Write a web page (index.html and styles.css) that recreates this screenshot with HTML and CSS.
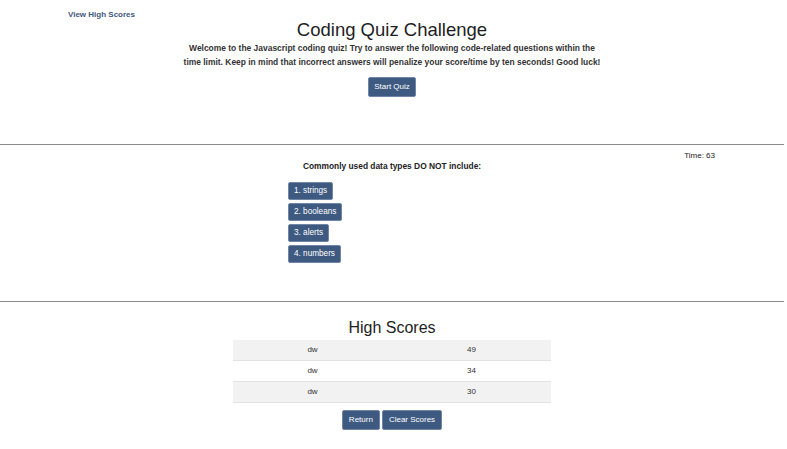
FILE: index.html
```html
<!DOCTYPE html>
<html>
<head>
<meta charset="utf-8">
<link rel="stylesheet" href="styles.css">
</head>
<body>
<header class="top">
  <a class="view-link" href="#">View High Scores</a>
</header>
<section class="intro">
  <h1 class="title">Coding Quiz Challenge</h1>
  <p class="lead">Welcome to the Javascript coding quiz! Try to answer the following code-related questions within the<br>time limit. Keep in mind that incorrect answers will penalize your score/time by ten seconds! Good luck!</p>
  <button class="btn start-btn">Start Quiz</button>
</section>
<hr class="rule">
<section class="quiz">
  <div class="timer">Time: 63</div>
  <p class="question">Commonly used data types DO NOT include:</p>
  <div class="choices">
    <button class="btn choice">1. strings</button>
    <button class="btn choice">2. booleans</button>
    <button class="btn choice">3. alerts</button>
    <button class="btn choice">4. numbers</button>
  </div>
</section>
<hr class="rule">
<section class="scores">
  <h2 class="scores-title">High Scores</h2>
  <table class="score-table">
    <tr class="odd"><td>dw</td><td>49</td></tr>
    <tr><td>dw</td><td>34</td></tr>
    <tr class="odd"><td>dw</td><td>30</td></tr>
  </table>
  <div class="score-actions">
    <button class="btn">Return</button>
    <button class="btn">Clear Scores</button>
  </div>
</section>
</body>
</html>
```
FILE: styles.css
```css
html, body {
  margin: 0;
  padding: 0;
  background: #fff;
}
body {
  font-family: "Liberation Sans", Arial, sans-serif;
  color: #222;
  width: 784px;
}
.top {
  padding: 9px 0 0 68px;
  height: 12px;
}
.view-link {
  font-size: 8px;
  font-weight: bold;
  color: #41597e;
  text-decoration: none;
  line-height: 12px;
  display: block;
}
.intro {
  text-align: center;
}
.title {
  font-size: 18.5px;
  font-weight: normal;
  margin: -1px 0 0;
  line-height: 20px;
  color: #1e1e1e;
}
.lead {
  font-size: 8.45px;
  font-weight: bold;
  line-height: 14px;
  color: #333;
  margin: 1px 0 6px;
}
.btn {
  font-family: "Liberation Sans", Arial, sans-serif;
  background: #3e5a81;
  color: #fff;
  border: 1px solid #6f86a6;
  border-radius: 2px;
  font-size: 8px;
  padding: 0 5px;
  height: 19px;
  line-height: 17px;
  cursor: pointer;
}
.start-btn {
  width: 48px;
  height: 20px;
  padding: 0;
}
.rule {
  margin: 47px 0 0;
  border: 0;
  border-top: 1px solid #8a8a8a;
  height: 0;
}
.quiz {
  height: 156px;
}
.timer {
  text-align: right;
  padding-right: 69px;
  font-size: 8px;
  color: #222;
  padding-top: 6px;
  line-height: 10px;
}
.question {
  text-align: center;
  font-size: 8.4px;
  font-weight: bold;
  margin: -1px 0 0;
  line-height: 12px;
  color: #222;
}
.choices {
  display: flex;
  flex-direction: column;
  align-items: flex-start;
  gap: 3px;
  padding-left: 288px;
  margin-top: 10px;
}
.choice {
  height: 18px;
  line-height: 16px;
  padding: 0 5px;
  font-size: 8.2px;
}
.quiz + .rule {
  margin-top: 0;
}
.scores {
  text-align: center;
}
.scores-title {
  font-size: 16px;
  font-weight: normal;
  margin: 16px 0 0;
  line-height: 20px;
  color: #1e1e1e;
}
.score-table {
  width: 318px;
  margin: 2px auto 0;
  border-collapse: collapse;
  font-size: 8px;
  color: #333;
}
.score-table td {
  width: 50%;
  height: 20px;
  padding: 0;
  text-align: center;
  border-top: 1px solid #e3e3e3;
}
.score-table tr:first-child td {
  border-top: 0;
}
.score-table tr:last-child td {
  border-bottom: 1px solid #e3e3e3;
}
.score-table .odd td {
  background: #f2f2f2;
}
.score-actions {
  display: flex;
  justify-content: center;
  gap: 2px;
  margin-top: 7px;
}
.score-actions .btn {
  height: 20px;
  padding: 0 6px;
}
```
